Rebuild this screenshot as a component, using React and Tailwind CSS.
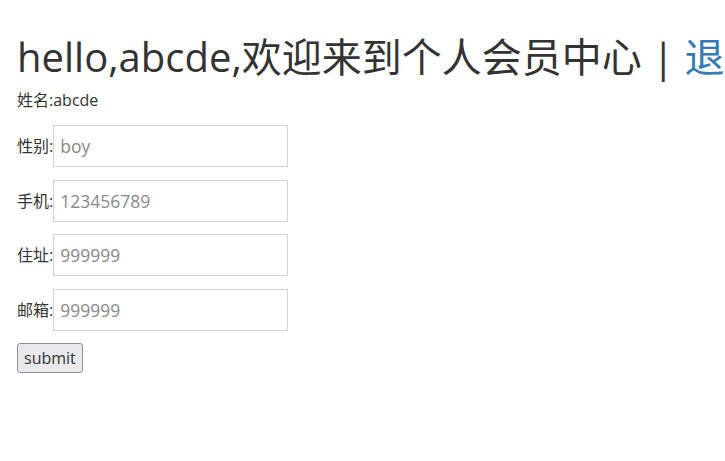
const FIELDS = [
  { label: '性别:', placeholder: 'boy' },
  { label: '手机:', placeholder: '123456789' },
  { label: '住址:', placeholder: '999999' },
  { label: '邮箱:', placeholder: '999999' },
];

export default function App() {
  return (
    <div
      className="h-[461px] w-[725px] overflow-hidden bg-white pl-[17px] text-[#333]"
      style={{ fontFamily: '"Open Sans", "Noto Sans CJK SC", sans-serif' }}
    >
      <h1 className="pt-[35px] whitespace-nowrap text-[40px] font-normal leading-[44px]">
        hello,abcde,欢迎来到个人会员中心 | <a href="#" className="text-[#337ab7]">退出</a>
      </h1>
      <p className="mt-[10px] text-[16px] leading-[22px]">姓名:abcde</p>
      <form className="mt-[14px] flex flex-col">
        {FIELDS.map(f => (
          <div key={f.label} className="mb-[12.5px] flex items-center text-[16px]">
            <span>{f.label}</span>
            <input
              className="h-[42px] w-[235px] border border-[#d4d4d4] px-[6px] text-[17.5px] text-[#333] outline-none placeholder:text-[#8a8a8a]"
              placeholder={f.placeholder}
            />
          </div>
        ))}
        <div>
          <button
            type="button"
            className="h-[30px] rounded-[3px] border border-[#8f8f9d] bg-[#e9e9ed] px-[6px] text-[16px] leading-none text-[#333]"
          >
            submit
          </button>
        </div>
      </form>
    </div>
  );
}
